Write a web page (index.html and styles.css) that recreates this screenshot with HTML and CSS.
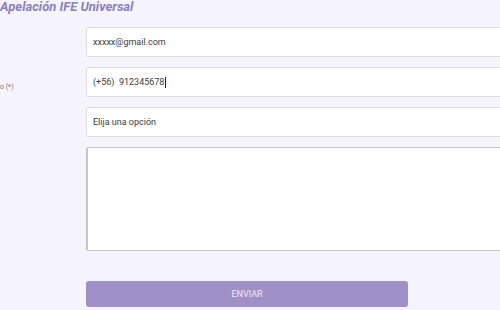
FILE: index.html
```html
<!DOCTYPE html>
<html lang="es">
<head>
<meta charset="utf-8">
<link rel="stylesheet" href="styles.css">
</head>
<body>
<div class="page">
  <h1 class="title">Apelación IFE Universal</h1>
  <form class="form">
    <div class="row">
      <label class="label"></label>
      <div class="field">xxxxx@gmail.com</div>
    </div>
    <div class="row">
      <label class="label">o (*)</label>
      <div class="field">(+56)&nbsp; 912345678<span class="caret"></span></div>
    </div>
    <div class="row">
      <label class="label"></label>
      <div class="field">Elija una opción</div>
    </div>
    <div class="row">
      <label class="label"></label>
      <div class="textarea"></div>
    </div>
    <div class="row actions">
      <span class="label"></span>
      <button type="button" class="submit">ENVIAR</button>
    </div>
  </form>
</div>
</body>
</html>
```
FILE: styles.css
```css
html, body {
  margin: 0;
  padding: 0;
  background: #f5f4fc;
  overflow: hidden;
}
.page {
  width: 500px;
  height: 310px;
  overflow: hidden;
  font-family: Roboto, "Liberation Sans", sans-serif;
}
.title {
  margin: 0;
  height: 27px;
  font-size: 13px;
  line-height: 14px;
  font-weight: 700;
  font-style: italic;
  color: #8b7fc0;
}
.form {
  display: flex;
  flex-direction: column;
  gap: 10px;
}
.row {
  display: grid;
  grid-template-columns: 86px 440px;
  align-items: center;
}
.label {
  font-size: 7px;
  color: #777;
  padding-top: 10px;
}
.field {
  box-sizing: border-box;
  height: 30px;
  background: #fff;
  border: 1px solid #dcdcdc;
  border-radius: 2px;
  font-size: 9px;
  color: #3c3c3c;
  display: flex;
  align-items: center;
  padding-left: 6px;
}
.caret {
  display: inline-block;
  width: 1px;
  height: 11px;
  background: #222;
  margin-left: 1px;
}
.textarea {
  box-sizing: border-box;
  height: 104px;
  background: #fff;
  border: 1px solid #c8c8c8;
  border-left: 2px solid #c6c6c6;
  border-radius: 2px;
}
.actions {
  margin-top: 20px;
  grid-template-columns: 86px 322px;
}
.submit {
  height: 26px;
  border: none;
  border-radius: 3px;
  background: #a090c8;
  color: #eeeaf8;
  font-family: Roboto, "Liberation Sans", sans-serif;
  font-size: 9px;
  padding: 0;
}
```
